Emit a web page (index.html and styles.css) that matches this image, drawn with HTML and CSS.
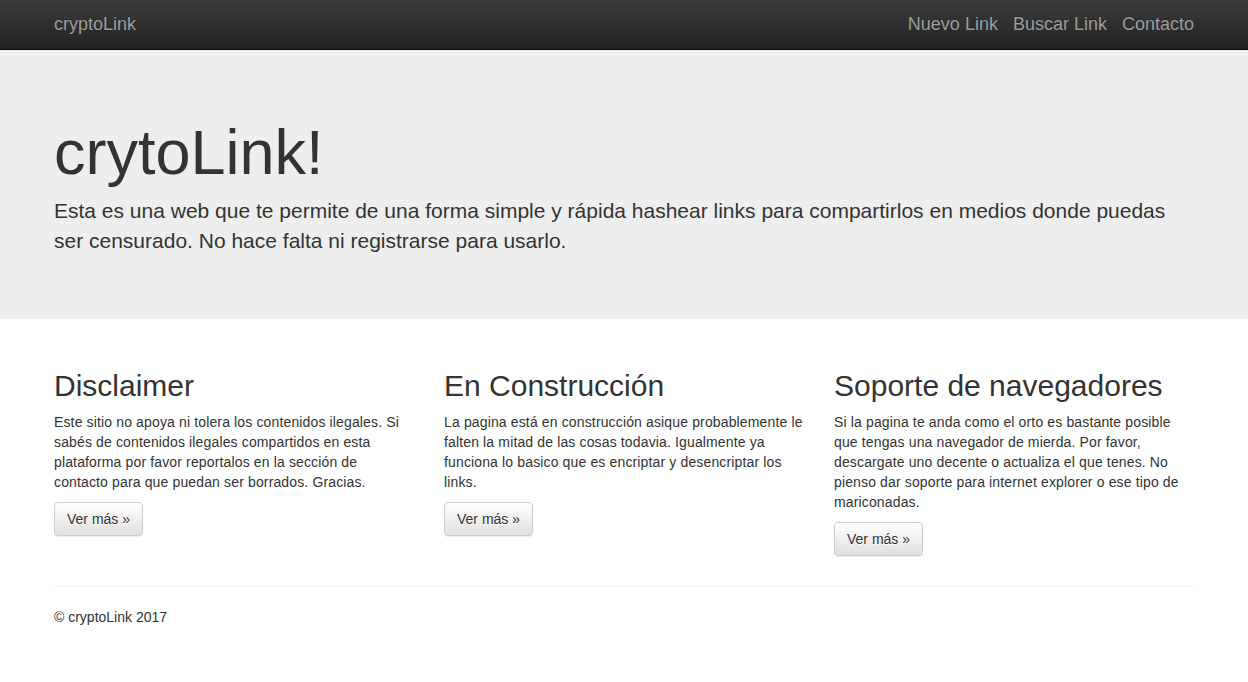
FILE: index.html
```html
<!DOCTYPE html>
<html lang="es">
<head>
    <meta charset="UTF-8">
    <meta name="viewport" content="width=device-width, initial-scale=1.0">
    <title>cryptoLink</title>
    <link rel="stylesheet" href="styles.css">
</head>
<body>
    <nav class="navbar">
        <div class="container navbar-inner">
            <a class="brand" href="#">cryptoLink</a>
            <ul class="nav">
                <li><a href="#">Nuevo Link</a></li>
                <li><a href="#">Buscar Link</a></li>
                <li><a href="#">Contacto</a></li>
            </ul>
        </div>
    </nav>

    <div class="jumbotron">
        <div class="container">
            <h1>crytoLink!</h1>
            <p>Esta es una web que te permite de una forma simple y rápida hashear links para compartirlos en medios donde puedas ser censurado. No hace falta ni registrarse para usarlo.</p>
        </div>
    </div>

    <div class="container">
        <div class="row">
            <div class="col">
                <h2>Disclaimer</h2>
                <p>Este sitio no apoya ni tolera los contenidos ilegales. Si sabés de contenidos ilegales compartidos en esta plataforma por favor reportalos en la sección de contacto para que puedan ser borrados. Gracias.</p>
                <p><a class="btn" href="#">Ver más &raquo;</a></p>
            </div>
            <div class="col">
                <h2>En Construcción</h2>
                <p>La pagina está en construcción asique probablemente le falten la mitad de las cosas todavia. Igualmente ya funciona lo basico que es encriptar y desencriptar los links.</p>
                <p><a class="btn" href="#">Ver más &raquo;</a></p>
            </div>
            <div class="col">
                <h2>Soporte de navegadores</h2>
                <p>Si la pagina te anda como el orto es bastante posible que tengas una navegador de mierda. Por favor, descargate uno decente o actualiza el que tenes. No pienso dar soporte para internet explorer o ese tipo de mariconadas.</p>
                <p><a class="btn" href="#">Ver más &raquo;</a></p>
            </div>
        </div>

        <hr>

        <footer>
            <p>&copy; cryptoLink 2017</p>
        </footer>
    </div>
</body>
</html>
```

FILE: styles.css
```css
html, body {
    margin: 0;
    padding: 0;
}
body {
    font-family: "Liberation Sans", Arial, Helvetica, sans-serif;
    font-size: 14px;
    line-height: 1.42857143;
    color: #333;
    background: #fff;
}
a { text-decoration: none; }
p { margin: 0 0 10px; }

.container {
    width: 1170px;
    margin: 0 auto;
    padding: 0 15px;
    box-sizing: border-box;
}

/* top bar */
.navbar {
    height: 50px;
    background: linear-gradient(to bottom, #3c3c3c 0, #222 100%);
    border-bottom: 1px solid #080808;
    box-sizing: border-box;
}
.navbar-inner {
    display: flex;
    justify-content: space-between;
    align-items: center;
    height: 100%;
    padding-bottom: 1px;
}
.brand {
    font-size: 18px;
    line-height: 20px;
    color: #9d9d9d;
    text-shadow: 0 -1px 0 rgba(0, 0, 0, .25);
}
.nav {
    display: flex;
    gap: 15px;
    list-style: none;
    margin: 0;
    padding: 0;
}
.nav a {
    font-size: 18px;
    line-height: 20px;
    color: #9d9d9d;
    text-shadow: 0 -1px 0 rgba(0, 0, 0, .25);
}
.nav a:hover { color: #fff; }

/* hero */
.jumbotron {
    background: #eee;
    padding: 48px 0;
    margin-bottom: 30px;
}
.jumbotron h1 {
    font-size: 63px;
    font-weight: 500;
    line-height: 68px;
    margin: 20px 0 10px;
}
.jumbotron p {
    font-size: 21px;
    font-weight: 200;
    margin-bottom: 15px;
}

/* columns */
.row {
    display: grid;
    grid-template-columns: repeat(3, 1fr);
    margin: 0 -15px;
}
.col { padding: 0 15px; }
.col h2 {
    font-size: 30px;
    font-weight: 500;
    line-height: 1.1;
    margin: 20px 0 10px;
}
.col p { letter-spacing: 0.14px; }

.btn {
    display: inline-block;
    padding: 6px 12px;
    font-size: 14px;
    line-height: 1.42857143;
    letter-spacing: 0;
    color: #333;
    border: 1px solid #ccc;
    border-radius: 4px;
    background: linear-gradient(to bottom, #fff 0, #e0e0e0 100%);
    text-shadow: 0 1px 0 #fff;
    box-shadow: inset 0 1px 0 rgba(255, 255, 255, .15), 0 1px 1px rgba(0, 0, 0, .075);
}
.btn:hover { background: #e0e0e0; }

hr {
    margin: 20px 0;
    border: 0;
    border-top: 1px solid #eee;
}
```
